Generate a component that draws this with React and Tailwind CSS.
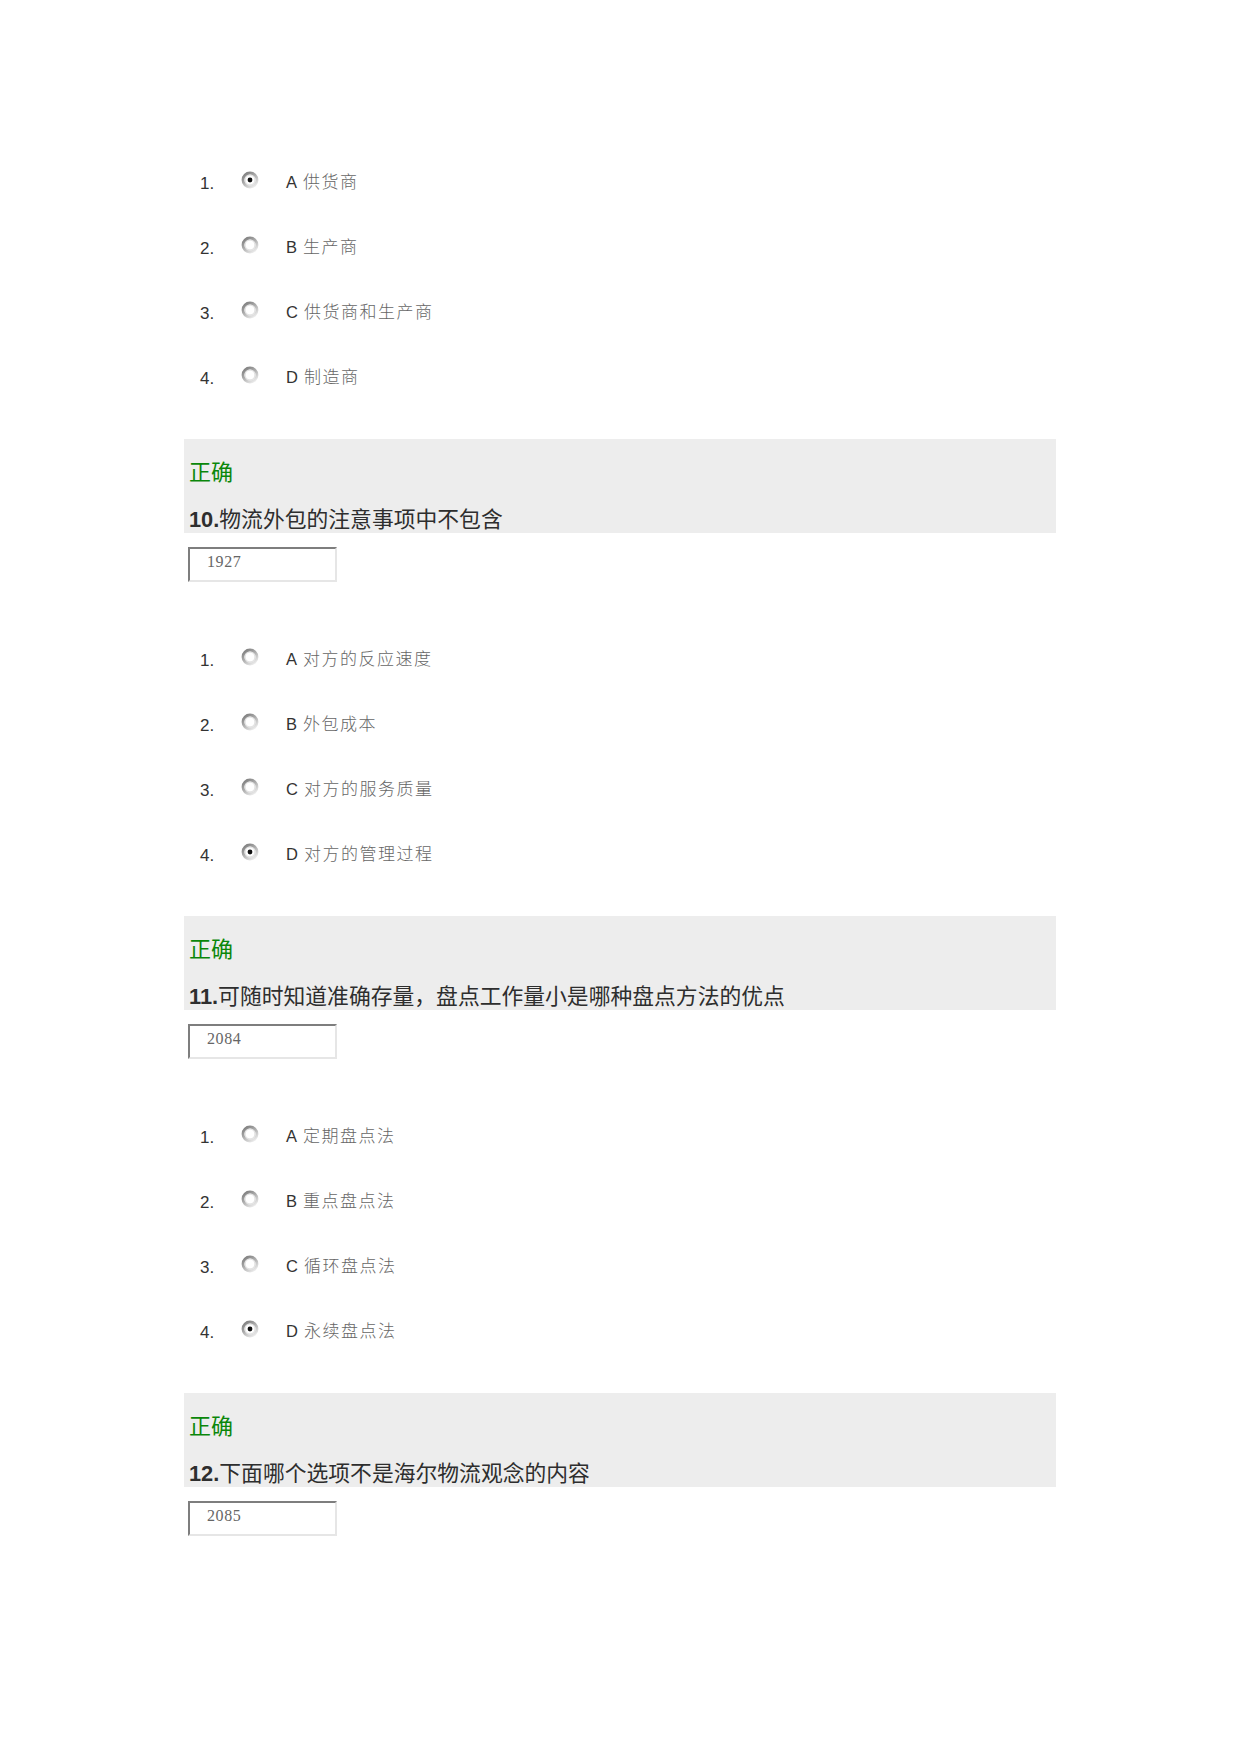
import React from 'react';

const sans = "font-['Liberation_Sans','Noto_Sans_CJK_SC',sans-serif]";

const sections = [
  {
    options: ['供货商', '生产商', '供货商和生产商', '制造商'],
    checked: 0,
    next: { num: '10', title: '物流外包的注意事项中不包含', code: '1927' },
  },
  {
    options: ['对方的反应速度', '外包成本', '对方的服务质量', '对方的管理过程'],
    checked: 3,
    next: { num: '11', title: '可随时知道准确存量，盘点工作量小是哪种盘点方法的优点', code: '2084' },
  },
  {
    options: ['定期盘点法', '重点盘点法', '循环盘点法', '永续盘点法'],
    checked: 3,
    next: { num: '12', title: '下面哪个选项不是海尔物流观念的内容', code: '2085' },
  },
];

const Radio = ({ checked }) => (
  <svg width="18" height="18" viewBox="0 0 18 18">
    <defs>
      <linearGradient id="rg" x1="0.1" y1="0" x2="0.8" y2="1">
        <stop offset="0" stopColor="#7d7d7d" />
        <stop offset="0.45" stopColor="#ababab" />
        <stop offset="1" stopColor="#ececec" />
      </linearGradient>
    </defs>
    <circle cx="9" cy="9" r="7" fill="#fff" stroke="url(#rg)" strokeWidth="2.8" />
    <circle cx="9" cy="9" r="5" fill="none" stroke="#dcdcdc" strokeWidth="1" />
    {checked && <circle cx="9" cy="9" r="2.4" fill="#111" />}
  </svg>
);

const Options = ({ options, checked }) => (
  <div className="pl-[200px]">
    {options.map((text, i) => (
      <div key={i} className="flex h-[65px] items-center">
        <span className={`${sans} w-[41px] text-[17px] text-[#333]`}>{i + 1}.</span>
        <span className="mb-[8px] flex w-[45px]">
          <Radio checked={i === checked} />
        </span>
        <span className="mb-[4px] flex items-baseline">
          <span className={`${sans} text-[16.5px] text-[#333]`}>{String.fromCharCode(65 + i)}</span>
          <span className="ml-[6px] font-['Noto_Sans_CJK_SC',sans-serif] text-[17px] font-light tracking-[1.5px] text-[#666]">
            {text}
          </span>
        </span>
      </div>
    ))}
  </div>
);

const Question = ({ num, title, code }) => (
  <>
    <div className={`${sans} ml-[184px] h-[94px] w-[872px] bg-[#ededed] pl-[5px] pt-[20px]`}>
      <div className="text-[22px] leading-[28px] text-[#0a870a]">正确</div>
      <div className="mt-[19px] text-[21.8px] leading-[28px] text-[#2e2e2e]">
        <span className="font-bold">{num}.</span>
        {title}
      </div>
    </div>
    <div className="ml-[188px] mt-[14px] h-[35px] w-[149px] border-2 border-t-[#7e7e7e] border-l-[#7e7e7e] border-r-[#e6e6e6] border-b-[#e6e6e6] bg-white pl-[17px] pt-[3px] font-['Liberation_Serif',serif] text-[16px] leading-[20px] tracking-[0.6px] text-[#666]">
      {code}
    </div>
  </>
);

export default function App() {
  return (
    <div className="h-[1754px] w-[1241px] bg-white pt-[151px]">
      {sections.map((s, i) => (
        <div key={i} className={i === 0 ? '' : 'mt-[46px]'}>
          <Options options={s.options} checked={s.checked} />
          <div className="mt-[28px]">
            <Question {...s.next} />
          </div>
        </div>
      ))}
    </div>
  );
}
